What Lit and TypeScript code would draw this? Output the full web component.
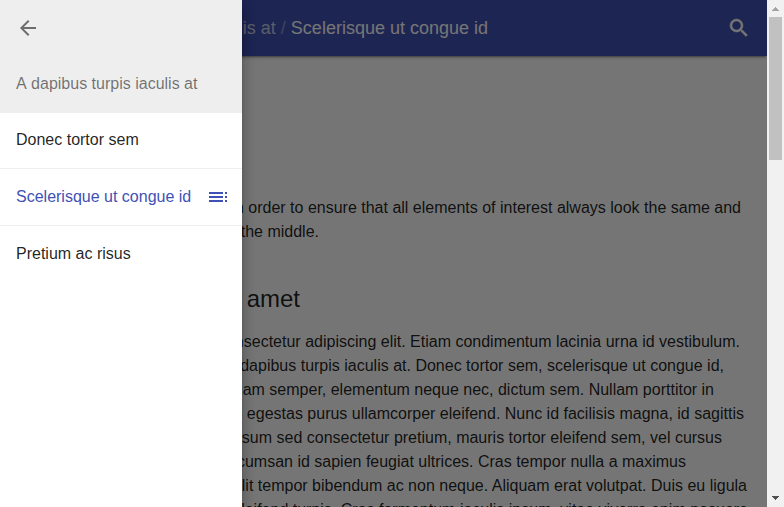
import { LitElement, html, css } from "lit";
import { customElement } from "lit/decorators.js";

/** One line of running text and the x at which it ends. */
type Line = [text: string, end: number];

const PAGE_WIDTH = 767;

const INTRO: Line[] = [
  ["in order to ensure that all elements of interest always look the same and", 741],
  ["the middle.", 319],
];

const BODY: Line[] = [
  ["consectetur adipiscing elit. Etiam condimentum lacinia urna id vestibulum.", 740],
  ["dapibus turpis iaculis at. Donec tortor sem, scelerisque ut congue id,", 724],
  ["diam semper, elementum neque nec, dictum sem. Nullam porttitor in", 714],
  ["egestas purus ullamcorper eleifend. Nunc id facilisis magna, id sagittis", 744],
  ["ipsum sed consectetur pretium, mauris tortor eleifend sem, vel cursus", 722],
  ["accumsan id sapien feugiat ultrices. Cras tempor nulla a maximus", 686],
  ["elit tempor bibendum ac non neque. Aliquam erat volutpat. Duis eu ligula", 747],
  ["eleifend turpis. Cras fermentum iaculis ipsum, vitae viverra enim posuere", 748],
];

@customElement("app-root")
export class AppRoot extends LitElement {
  static styles = css`
    :host {
      display: flex;
      position: relative;
      height: 100vh;
      overflow: hidden;
      background: #fff;
      color: rgba(0, 0, 0, 0.87);
      font: 16px/24px "Liberation Sans", Arial, sans-serif;
    }
    * { box-sizing: border-box; }
    svg { display: block; width: 24px; height: 24px; fill: currentColor; flex: none; }
    .page { width: 767px; flex: none; overflow: hidden; }
    .bar {
      position: relative;
      display: flex;
      align-items: center;
      justify-content: space-between;
      height: 56px;
      padding: 0 16px 0 72px;
      background: #3f51b5;
      color: #fff;
      font-size: 18px;
      box-shadow: 0 2px 2px rgba(0,0,0,.14), 0 1px 5px rgba(0,0,0,.12), 0 3px 1px -2px rgba(0,0,0,.2);
    }
    .crumbs { width: 416px; text-align: right; white-space: nowrap; }
    .parent { color: rgba(255, 255, 255, 0.7); }
    .slash { color: rgba(255, 255, 255, 0.4); }
    .search { stroke: currentColor; stroke-width: 0.5; }
    .content { padding-top: 140px; }
    .line { text-align: right; white-space: nowrap; }
    h2 {
      margin: 39px 0 15px;
      padding-right: 467px;
      text-align: right;
      font-size: 24px;
      line-height: 32px;
      font-weight: 400;
    }
    .scrim { position: absolute; inset: 0 17px 0 0; background: rgba(0, 0, 0, 0.54); }
    .drawer {
      position: absolute;
      left: 0;
      top: 0;
      bottom: 0;
      width: 242px;
      background: #fff;
      box-shadow: 0 8px 10px 1px rgba(0,0,0,.14), 0 3px 14px 2px rgba(0,0,0,.12), 0 5px 5px -3px rgba(0,0,0,.4);
    }
    .head { height: 113px; padding: 16px; background: #eee; color: rgba(0, 0, 0, 0.54); }
    .title { margin-top: 32px; font-kerning: none; }
    .item {
      display: flex;
      align-items: center;
      justify-content: space-between;
      height: 57px;
      padding: 0 12px 0 16px;
      border-top: 1px solid #eee;
      white-space: nowrap;
    }
    .item:first-child { height: 55px; border-top: 0; padding-bottom: 2px; }
    .active { color: #3f51b5; }
    .scrollbar {
      display: flex;
      flex-direction: column;
      align-items: center;
      width: 17px;
      flex: none;
      background: #f1f1f1;
    }
    .arrow { width: 17px; height: 17px; shape-rendering: crispEdges; }
    .up { fill: #a3a3a3; }
    .down { fill: #505050; margin-top: auto; }
    .thumb { width: 13px; height: 143px; background: #c1c1c1; }
  `;

  private lines(lines: Line[]) {
    return lines.map(
      ([text, end]) => html`<div class="line" style="padding-right:${PAGE_WIDTH - end}px">${text}</div>`,
    );
  }

  render() {
    return html`
      <div class="page">
        <header class="bar">
          <div class="crumbs"><span class="parent">A dapibus turpis iaculis at</span> <span class="slash">/</span> Scelerisque ut congue id</div>
          <svg class="search" viewBox="0 0 24 24"><path d="M15.5 14h-.79l-.28-.27A6.471 6.471 0 0 0 16 9.5 6.5 6.5 0 1 0 9.5 16c1.61 0 3.09-.59 4.23-1.57l.27.28v.79l5 4.99L20.49 19l-4.99-5zm-6 0C7.01 14 5 11.99 5 9.5S7.01 5 9.5 5 14 7.01 14 9.5 11.99 14 9.5 14z"/></svg>
        </header>
        <main class="content">
          ${this.lines(INTRO)}
          <h2>amet</h2>
          ${this.lines(BODY)}
        </main>
      </div>
      <div class="scrollbar">
        <svg class="arrow up" viewBox="0 0 17 17"><path d="M8 7h1v1h1v1h1v1h1v1H5v-1h1V9h1V8h1z"/></svg>
        <div class="thumb"></div>
        <svg class="arrow down" viewBox="0 0 17 17"><path d="M5 6h7v1h-1v1h-1v1H9v1H8V9H7V8H6V7H5z"/></svg>
      </div>
      <div class="scrim"></div>
      <nav class="drawer">
        <div class="head">
          <svg viewBox="0 0 24 24"><path d="M20 11H7.830l5.590-5.590L12 4l-8 8 8 8 1.410-1.410L7.830 13H20v-2z"/></svg>
          <div class="title">A dapibus turpis iaculis at</div>
        </div>
        <div>
          <div class="item">Donec tortor sem</div>
          <div class="item active">
            Scelerisque ut congue id
            <svg viewBox="0 0 24 24"><path d="M3 9h14V7H3v2zm0 4h14v-2H3v2zm0 4h14v-2H3v2zm16 0h2v-2h-2v2zm0-10v2h2V7h-2zm0 6h2v-2h-2v2z"/></svg>
          </div>
          <div class="item">Pretium ac risus</div>
        </div>
      </nav>
    `;
  }
}
